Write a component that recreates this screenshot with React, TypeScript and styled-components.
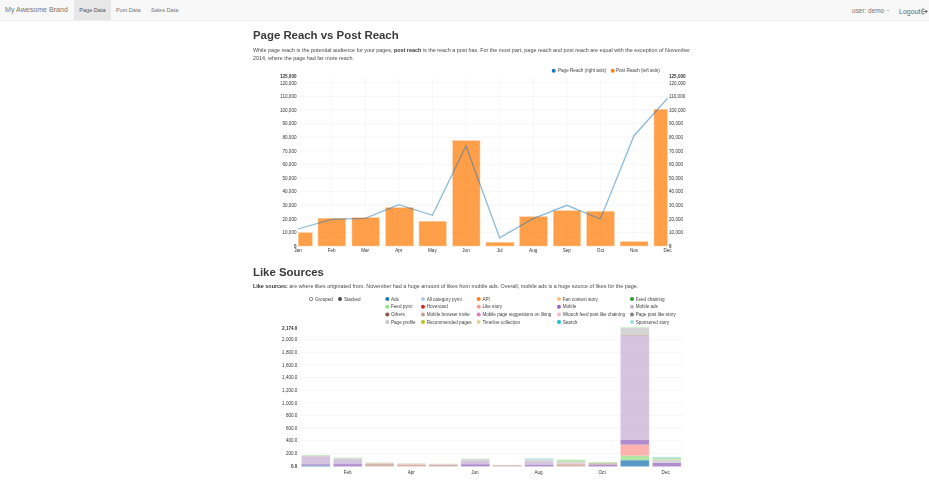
import React from "react";
import styled, { createGlobalStyle } from "styled-components";

const Global = createGlobalStyle`
  html, body { margin: 0; padding: 0; background: #fff; overflow: hidden; height: 480px; }
  body { font-family: "Liberation Sans", Arial, sans-serif; color: #333; }
`;

const Page = styled.div`
  width: 929px;
  height: 480px;
  overflow: hidden;
  filter: blur(0.45px);
`;
const Navbar = styled.nav`
  height: 20px;
  display: flex;
  align-items: stretch;
  background: #f8f8f8;
  border-bottom: 1px solid #ececec;
  box-sizing: content-box;
`;
const Brand = styled.div`
  flex: none;
  font-size: 7.1px;
  color: #777;
  line-height: 20px;
  padding-left: 5px;
  width: 74px;
  box-sizing: border-box;
  white-space: nowrap;
`;
const Tab = styled.div<{ $active?: boolean }>`
  flex: none;
  font-size: 5.6px;
  line-height: 20px;
  color: ${(p) => (p.$active ? "#555" : "#777")};
  background: ${(p) => (p.$active ? "#e7e7e7" : "transparent")};
  padding: 0 5.2px;
`;
const NavRight = styled.div`
  margin-left: auto;
  display: flex;
  align-items: center;
  color: #777;
`;
const UserMenu = styled.div`
  font-size: 6.4px;
  display: flex;
  align-items: center;
  gap: 2.5px;
  margin-right: 10.5px;
`;
const Caret = styled.span`
  width: 0;
  height: 0;
  border-left: 1.3px solid transparent;
  border-right: 1.3px solid transparent;
  border-top: 1.3px solid #777;
`;
const Logout = styled.div`
  font-size: 7px;
  display: flex;
  align-items: center;
  margin-right: 1.5px;
  margin-top: 2px;
  color: #666;
`;
const Main = styled.main`
  width: 437px;
  margin-left: 253px;
  padding-top: 7px;
`;
const Heading = styled.h2<{ $top: number }>`
  font-size: 11.4px;
  line-height: 14px;
  font-weight: 700;
  color: #3a3a3a;
  margin: ${(p) => p.$top}px 0 0;
`;
const Lead = styled.p<{ $before: number; $after: number }>`
  font-size: 5.41px;
  line-height: 8px;
  color: #4a4a4a;
  margin: ${(p) => p.$before}px 0 ${(p) => p.$after}px;
  width: 440px;
  strong { color: #333; }
`;
const ChartSvg = styled.svg`
  display: block;
  margin-left: 17px;
  overflow: visible;
`;
const Tick = styled.text<{ $bold?: boolean }>`
  font-family: "Liberation Sans", Arial, sans-serif;
  font-size: 4.6px;
  font-weight: ${(p) => (p.$bold ? 700 : 400)};
  fill: #333;
`;
const LegendText = styled.text`
  font-family: "Liberation Sans", Arial, sans-serif;
  font-size: 4.6px;
  fill: #444;
`;

const months = ["Jan","Feb","Mar","Apr","May","Jun","Jul","Aug","Sep","Oct","Nov","Dec"];
const monthX = (i: number) => 298 + i * 33.6;
const reachY = (v: number) => 246 - v * 0.00136;
const fmt = (n: number) => n.toLocaleString("en-US");

const bars: [number, number, number][] = [
  [298.3, 312.3, 232.7], [318, 345.7, 218.3], [352, 379.3, 217.7], [385.7, 413.3, 207.7],
  [419, 446.3, 221.3], [452.7, 480, 140.7], [486, 514, 242.3], [519.7, 547.3, 216.7],
  [553.3, 580.7, 210.7], [586.7, 614.3, 211.3], [620.3, 648, 241.7], [654, 667.3, 109.3],
];
const line = [229, 219.3, 218.3, 204.7, 215.3, 146, 237.7, 218.7, 205.3, 219, 135.7, 98.3];

function ReachChart() {
  const ticks = Array.from({ length: 12 }, (_, i) => (i + 1) * 10000);
  return (
    <ChartSvg width={420} height={192} viewBox="270 62 420 192">
      {ticks.map((t) => (
        <line key={t} x1={298} x2={668} y1={reachY(t)} y2={reachY(t)} stroke="#f0f0f0" strokeWidth={0.6} />
      ))}
      {months.slice(1, 11).map((m, i) => (
        <line key={m} x1={monthX(i + 1)} x2={monthX(i + 1)} y1={78} y2={246} stroke="#f1f1f1" strokeWidth={0.6} />
      ))}
      {bars.map(([a, b, top], i) => (
        <rect key={i} x={a} y={top} width={b - a} height={246 - top} fill="#ff7f0e" fillOpacity={0.75} stroke="#ffcf9f" strokeWidth={0.5} />
      ))}
      <polyline
        points={line.map((y, i) => `${monthX(i)},${y}`).join(" ")}
        fill="none"
        stroke="#1f77b4"
        strokeOpacity={0.5}
        strokeWidth={1.3}
      />
      {[0, ...ticks].map((t) => (
        <React.Fragment key={t}>
          <Tick x={296.5} y={reachY(t) + 1.7} textAnchor="end" $bold={t === 0}>{fmt(t)}</Tick>
          <Tick x={669} y={reachY(t) + 1.7} $bold={t === 0}>{fmt(t)}</Tick>
        </React.Fragment>
      ))}
      <Tick x={296.5} y={77.7} textAnchor="end" $bold>125,000</Tick>
      <Tick x={669} y={77.7} $bold>125,000</Tick>
      {months.map((m, i) => (
        <Tick key={m} x={monthX(i)} y={251.5} textAnchor="middle">{m}</Tick>
      ))}
      <circle cx={553.7} cy={70.7} r={2} fill="#1f77b4" />
      <LegendText x={558} y={72.3}>Page Reach (right axis)</LegendText>
      <circle cx={612.7} cy={70.7} r={2} fill="#ff7f0e" />
      <LegendText x={616} y={72.3}>Post Reach (left axis)</LegendText>
    </ChartSvg>
  );
}

const legendCols: [number, [string, string][]][] = [
  [387.3, [["Ads", "#1f77b4"], ["Feed pymi", "#98df8a"], ["Others", "#8c564b"], ["Page profile", "#c7c7c7"]]],
  [423, [["All category pymi", "#aec7e8"], ["Hovercard", "#d62728"], ["Mobile browser invite", "#c49c94"], ["Recommended pages", "#bcbd22"]]],
  [478.7, [["API", "#ff7f0e"], ["Like story", "#ff9896"], ["Mobile page suggestions on liking", "#e377c2"], ["Timeline collection", "#dbdb8d"]]],
  [559, [["Fan context story", "#ffbb78"], ["Mobile", "#9467bd"], ["Wtouch feed post like chaining", "#f7b6d2"], ["Search", "#17becf"]]],
  [632, [["Feed chaining", "#2ca02c"], ["Mobile ads", "#c5b0d5"], ["Page post like story", "#7f7f7f"], ["Sponsored story", "#9edae5"]]],
];
const legendRows = [299, 306.8, 314.4, 322];

const S = { blue: "#1f77b4", green: "#98df8a", red: "#ff9896", purple: "#9467bd", lilac: "#c5b0d5", brown: "#c49c94", grey: "#c7c7c7", mint: "#98df8a", cyan: "#9edae5" };
const stacks: [string, number][][] = [
  [[S.blue, 1], [S.purple, 1.4], [S.lilac, 7.4], [S.brown, 0.5], [S.grey, 0.8], [S.mint, 0.6]],
  [[S.purple, 2.5], [S.lilac, 4.8], [S.grey, 1], [S.mint, 0.6]],
  [[S.brown, 2.6], [S.red, 0.6], [S.grey, 0.6], [S.mint, 0.5]],
  [[S.brown, 2], [S.red, 0.4], [S.grey, 0.5], [S.mint, 0.4]],
  [[S.brown, 1.8], [S.red, 0.3], [S.grey, 0.5], [S.mint, 0.3]],
  [[S.purple, 2.4], [S.lilac, 3.4], [S.grey, 1.5], [S.mint, 0.6]],
  [[S.brown, 1.4], [S.grey, 0.4]],
  [[S.purple, 2], [S.lilac, 2.6], [S.grey, 2.6], [S.cyan, 1.3]],
  [[S.brown, 2.4], [S.red, 0.6], [S.grey, 2.2], [S.mint, 1.7]],
  [[S.purple, 2], [S.brown, 1.4], [S.mint, 1.1]],
  [[S.blue, 6.4], [S.green, 4.6], [S.red, 11], [S.purple, 4.7], [S.lilac, 104], [S.brown, 1], [S.grey, 7], [S.mint, 0.7]],
  [[S.purple, 3.6], [S.grey, 3.6], [S.mint, 1.6], [S.cyan, 1]],
];

const likeY = (v: number) => 466 - v * 0.0632;

function LikeChart() {
  const ticks = [200, 400, 600, 800, 1000, 1200, 1400, 1600, 1800, 2000];
  const opts: [string, boolean, number][] = [["Grouped", false, 311], ["Stacked", true, 340]];
  return (
    <ChartSvg width={420} height={188} viewBox="270 292 420 188">
      {opts.map(([label, on, x]) => (
        <React.Fragment key={label}>
          <circle cx={x} cy={299} r={1.7} fill={on ? "#444" : "#fff"} stroke="#444" strokeWidth={0.6} />
          <LegendText x={x + 4} y={300.6}>{label}</LegendText>
        </React.Fragment>
      ))}
      {legendCols.map(([x, items]) =>
        items.map(([label, color], i) => (
          <React.Fragment key={label}>
            <circle cx={x} cy={legendRows[i]} r={2} fill={color} />
            <LegendText x={x + 3.7} y={legendRows[i] + 1.6}>{label}</LegendText>
          </React.Fragment>
        ))
      )}
      {ticks.map((t) => (
        <line key={t} x1={300} x2={683} y1={likeY(t)} y2={likeY(t)} stroke="#f0f0f0" strokeWidth={0.6} />
      ))}
      {stacks.map((segs, i) => {
        const x = 301.4 + i * 31.9;
        let bottom = 466.6;
        return (
          <g key={i}>
            {segs.map(([c, h], j) => {
              bottom -= h;
              return <rect key={j} x={x} y={bottom} width={28.8} height={h} fill={c} fillOpacity={0.75} />;
            })}
            <rect x={x} y={bottom} width={28.8} height={466.6 - bottom} fill="none" stroke="#fff" strokeOpacity={0.5} strokeWidth={0.5} />
          </g>
        );
      })}
      {[0, ...ticks].map((t) => (
        <Tick key={t} x={297.4} y={likeY(t) + 1.7} textAnchor="end" $bold={t === 0}>{fmt(t) + ".0"}</Tick>
      ))}
      <Tick x={297.4} y={329.6} textAnchor="end" $bold>2,174.0</Tick>
      {["Feb", "Apr", "Jun", "Aug", "Oct", "Dec"].map((m, i) => (
        <Tick key={m} x={347.7 + i * 63.6} y={474.3} textAnchor="middle">{m}</Tick>
      ))}
    </ChartSvg>
  );
}

function LogoutIcon() {
  return (
    <svg width="7" height="7" viewBox="0 0 24 24" fill="none" stroke="#666" strokeWidth="3.4" strokeLinecap="round">
      <path d="M10 4H6a3 3 0 0 0-3 3v10a3 3 0 0 0 3 3h4" />
      <path d="M9 12h12M16 7l5 5-5 5" />
    </svg>
  );
}

export default function App() {
  return (
    <Page>
      <Global />
      <Navbar>
        <Brand>My Awesome Brand</Brand>
        <Tab $active>Page Data</Tab>
        <Tab>Post Data</Tab>
        <Tab>Sales Data</Tab>
        <NavRight>
          <UserMenu>user: demo <Caret /></UserMenu>
          <Logout>Logout<LogoutIcon /></Logout>
        </NavRight>
      </Navbar>
      <Main>
        <Heading $top={0}>Page Reach vs Post Reach</Heading>
        <Lead $before={3.5} $after={0.5}>
          While page reach is the potential audience for your pages, <strong>post reach</strong> is the reach a post has. For the most part, page reach and post reach are equal with the exception of November 2014, where the page had far more reach.
        </Lead>
        <ReachChart />
        <Heading $top={11}>Like Sources</Heading>
        <Lead $before={2.5} $after={2.5}>
          <strong>Like sources:</strong> are where likes originated from. November had a huge amount of likes from mobile ads. Overall, mobile ads is a huge source of likes for the page.
        </Lead>
        <LikeChart />
      </Main>
    </Page>
  );
}
